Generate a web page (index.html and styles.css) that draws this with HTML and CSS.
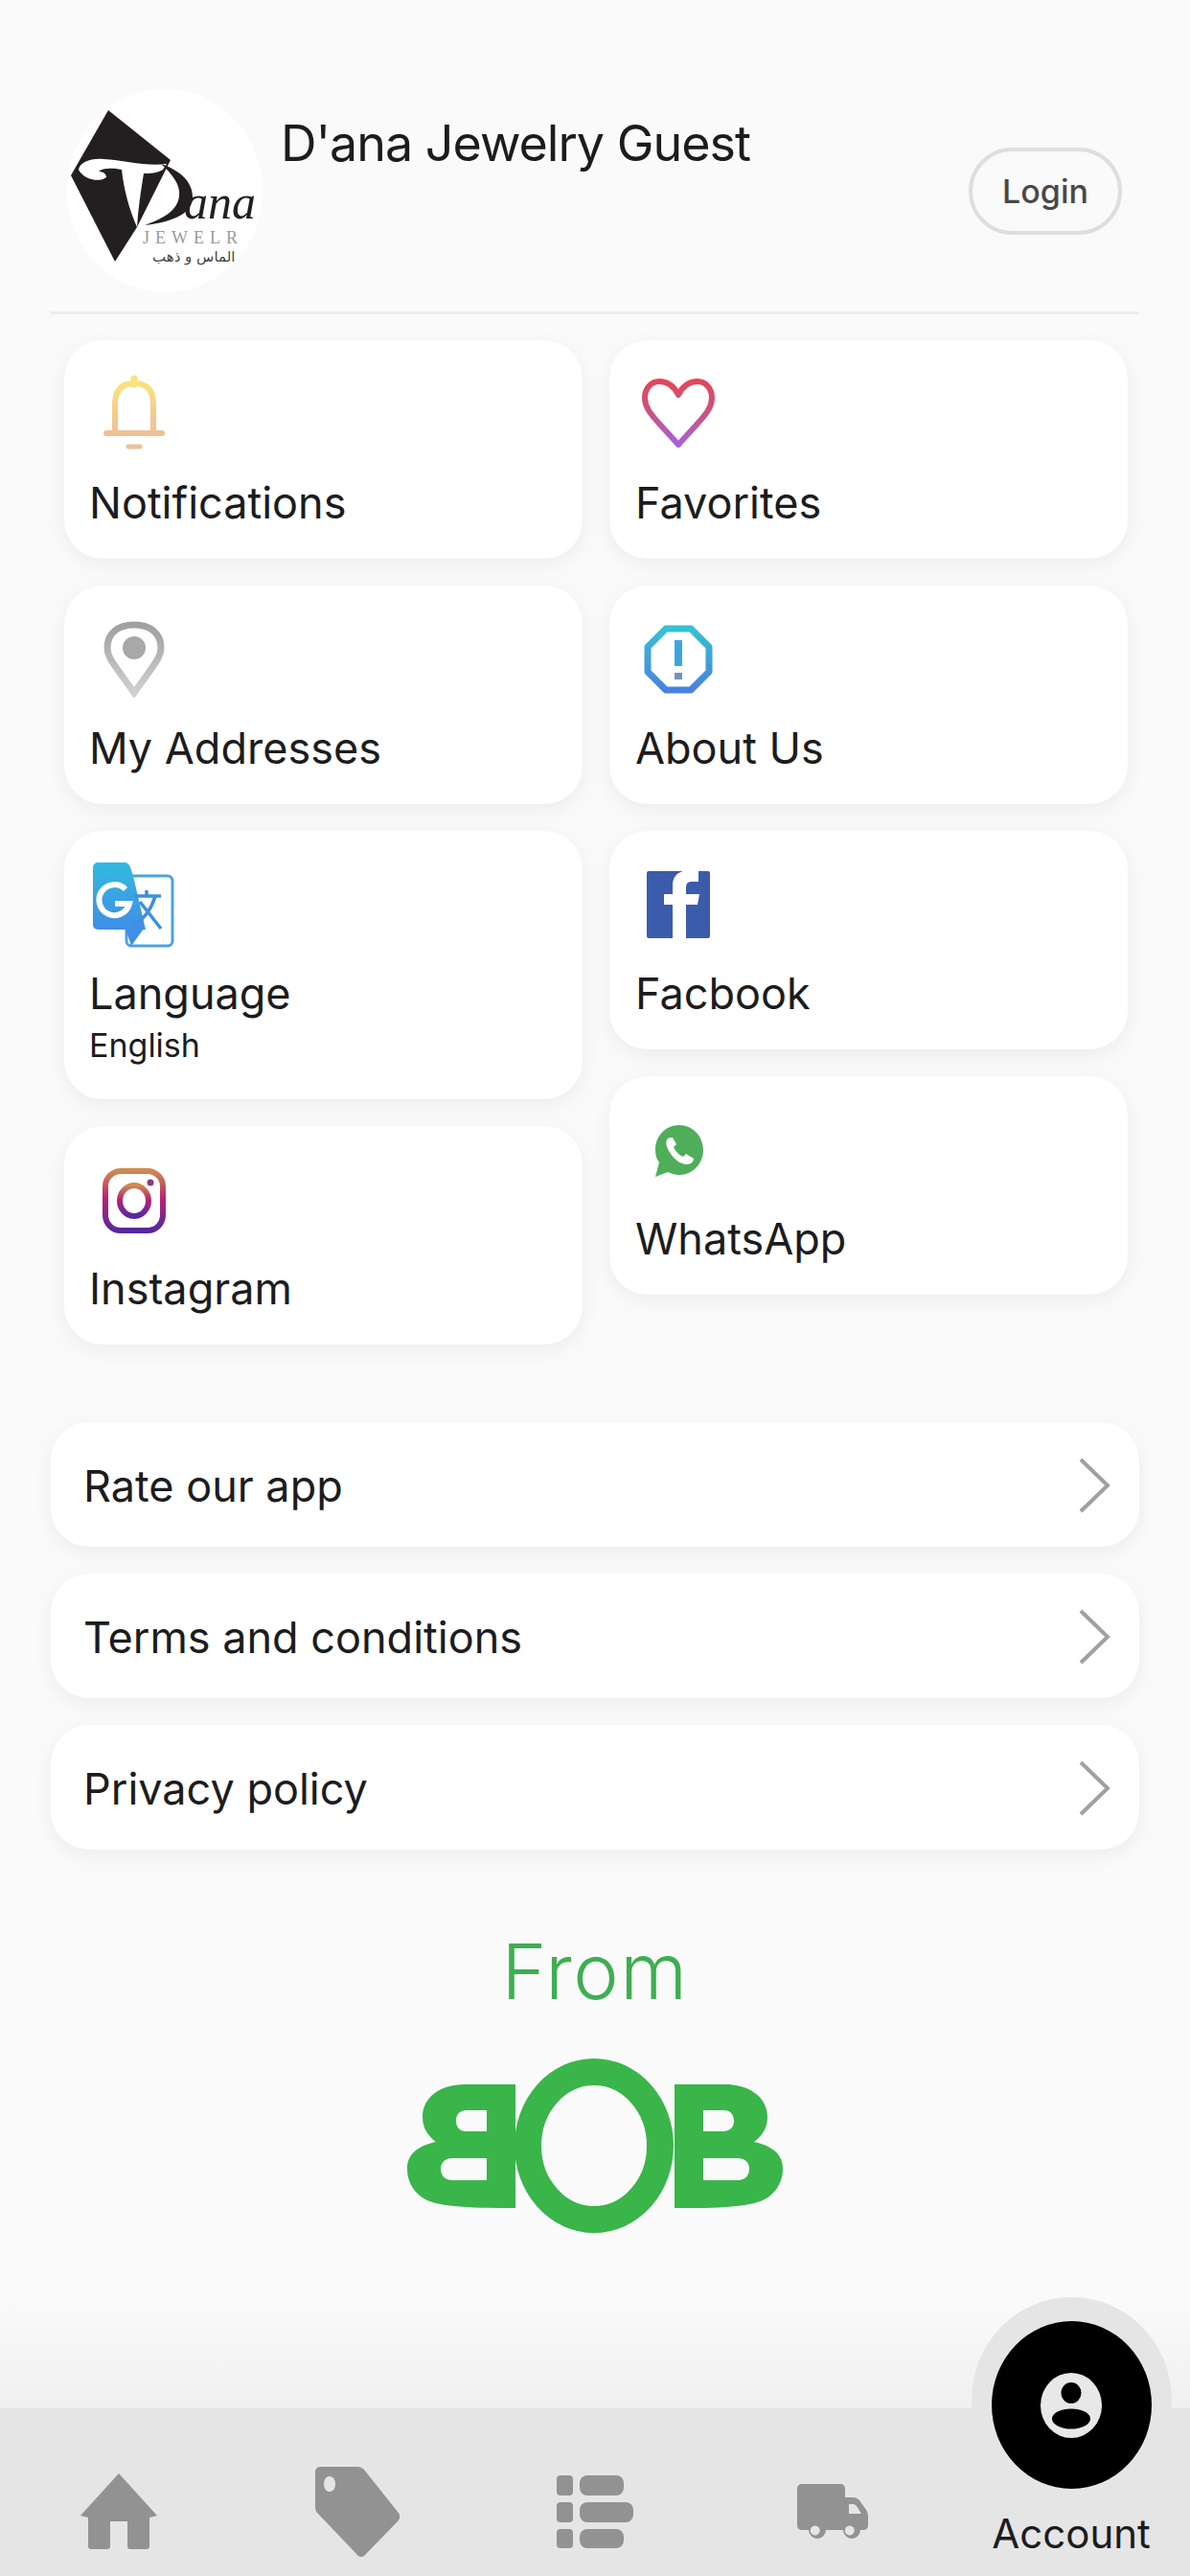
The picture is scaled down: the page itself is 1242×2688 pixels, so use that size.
FILE: index.html
```html
<!DOCTYPE html>
<html lang="en">
<head>
    <meta charset="UTF-8">
    <meta name="viewport" content="width=device-width, initial-scale=1.0">
    <title>Account</title>
    <link rel="stylesheet" href="styles.css">
</head>
<body>
    <div class="page">
        <main class="content">
            <header class="profile">
                <div class="avatar">
                    <svg class="avatar-mark" viewBox="0 0 204 212">
                        <polygon points="43,22 108,74 73,144 50,180 4,90" fill="#231f20"/>
                        <path d="M12 84c2-8 12-12 26-11 22 1 44 8 66 5l-4 6c-6 4-14 4-20 4-3 18-6 38-7 56-8-18-14-40-16-60-10-2-20-2-24 2 4 0 8 2 8 6-8 6-24 2-29-8z" fill="#fff"/>
                        <path d="M98 78c18 6 34 18 33 36-1 14-16 24-50 28 22-8 34-16 36-30 2-12-8-24-19-34z" fill="#231f20"/>
                    </svg>
                    <span class="avatar-dana">ana</span>
                    <span class="avatar-jewelry">JEWELR</span>
                    <span class="avatar-arabic">الماس و ذهب</span>
                </div>
                <h1 class="profile-name">D'ana Jewelry Guest</h1>
                <button class="login-btn">Login</button>
            </header>
            <div class="divider"></div>

            <div class="card-columns">
                <div class="card-column">
                    <a class="card">
                        <svg class="card-icon" viewBox="0 0 64 82">
                            <defs><linearGradient id="bellGrad" x1="0" y1="0" x2="0" y2="1"><stop offset="0" stop-color="#f9e27c"/><stop offset="1" stop-color="#efc095"/></linearGradient></defs>
                            <path d="M3 62h58M12 62V32C12 16 20 10 32 10s20 6 20 22v30" fill="none" stroke="url(#bellGrad)" stroke-width="6" stroke-linecap="round"/>
                            <path d="M32 5v6" stroke="#f9e27c" stroke-width="7" stroke-linecap="round"/>
                            <path d="M26 76h12" stroke="#efc095" stroke-width="5" stroke-linecap="round"/>
                        </svg>
                        <span class="card-title">Notifications</span>
                    </a>
                    <a class="card">
                        <svg class="card-icon" viewBox="0 0 64 82">
                            <defs><linearGradient id="pinGrad" x1="0" y1="0" x2="0" y2="1"><stop offset="0" stop-color="#a0a0a0"/><stop offset="1" stop-color="#d0d0d0"/></linearGradient></defs>
                            <path d="M32 6C15 6 4 15 4 30c0 9 6 16 13 26l15 21 15-21c7-10 13-17 13-26C60 15 49 6 32 6z" fill="none" stroke="url(#pinGrad)" stroke-width="7"/>
                            <ellipse cx="32" cy="30" rx="12" ry="12" fill="#a8a8a8"/>
                        </svg>
                        <span class="card-title">My Addresses</span>
                    </a>
                    <a class="card card-translate">
                        <svg class="card-icon icon-translate" viewBox="0 0 86 90">
                            <defs><linearGradient id="transGrad" x1="0" y1="0" x2="0" y2="1"><stop offset="0" stop-color="#33b9e0"/><stop offset="1" stop-color="#3f8fe6"/></linearGradient></defs>
                            <rect x="36" y="15" width="48" height="73" rx="5" fill="#fff" stroke="#4aa3e4" stroke-width="3"/>
                            <path d="M6 1h28c3 0 5 2 6 5l3 9 13 56H6a5 5 0 0 1-5-5V6a5 5 0 0 1 5-5z" fill="url(#transGrad)"/>
                            <path d="M35 70l6 18 13-18z" fill="#3f8fe6"/>
                            <path d="M35 29a16 16 0 1 0 4 15H24" fill="none" stroke="#fff" stroke-width="6"/>
                            <path d="M44 36h28M57 30v6M66 36c-4 14-12 24-22 30M50 42l22 28" fill="none" stroke="#3f8fd8" stroke-width="3.5"/>
                        </svg>
                        <span class="card-title">Language</span>
                        <span class="card-sub">English</span>
                    </a>
                    <a class="card">
                        <svg class="card-icon icon-insta" viewBox="0 0 66 68">
                            <defs><linearGradient id="instaGrad" x1="0" y1="0" x2="0" y2="1"><stop offset="0" stop-color="#d08a50"/><stop offset="0.45" stop-color="#b82472"/><stop offset="1" stop-color="#5628a0"/></linearGradient></defs>
                            <rect x="3" y="3" width="60" height="62" rx="16" fill="none" stroke="url(#instaGrad)" stroke-width="6"/>
                            <ellipse cx="33" cy="34" rx="15" ry="16" fill="none" stroke="url(#instaGrad)" stroke-width="6"/>
                            <circle cx="50" cy="15" r="3.5" fill="#8c3a80"/>
                        </svg>
                        <span class="card-title">Instagram</span>
                    </a>
                </div>
                <div class="card-column">
                    <a class="card">
                        <svg class="card-icon icon-heart" viewBox="0 0 76 72">
                            <defs><linearGradient id="heartGrad" x1="0" y1="0" x2="0" y2="1"><stop offset="0" stop-color="#e2475a"/><stop offset="0.5" stop-color="#c9547e"/><stop offset="1" stop-color="#a960e0"/></linearGradient></defs>
                            <path d="M38 17C33 7 26 3 18 3 9 3 3 11 3 20c0 10 6 17 15 27l20 22 20-22c9-10 15-17 15-27 0-9-6-17-15-17-8 0-15 4-20 14z" fill="none" stroke="url(#heartGrad)" stroke-width="6" stroke-linejoin="round"/>
                        </svg>
                        <span class="card-title">Favorites</span>
                    </a>
                    <a class="card">
                        <svg class="card-icon icon-about" viewBox="0 0 72 72">
                            <defs><linearGradient id="aboutGrad" x1="0" y1="0" x2="0" y2="1"><stop offset="0" stop-color="#36c2d0"/><stop offset="1" stop-color="#4a80e0"/></linearGradient></defs>
                            <polygon points="23,4 49,4 68,23 68,49 49,68 23,68 4,49 4,23" fill="none" stroke="url(#aboutGrad)" stroke-width="7" stroke-linejoin="round"/>
                            <path d="M36 16v27" stroke="#3da6de" stroke-width="8"/>
                            <rect x="32" y="50" width="8" height="7" fill="#6f94c8"/>
                        </svg>
                        <span class="card-title">About Us</span>
                    </a>
                    <a class="card">
                        <svg class="card-icon icon-fb" viewBox="0 0 66 70">
                            <path d="M2 0h36v0c-8 2-11 8-11 15v9h-9v11h9v35H2a2 2 0 0 1-2-2V2a2 2 0 0 1 2-2z" fill="#3b5cab"/>
                            <path d="M54 0h10a2 2 0 0 1 2 2v66a2 2 0 0 1-2 2H41V35h12l2-11H41v-7c0-4 2-6 6-6h7z" fill="#3b5cab"/>
                        </svg>
                        <span class="card-title">Facbook</span>
                    </a>
                    <a class="card">
                        <svg class="card-icon icon-wa" viewBox="0 0 52 56">
                            <path d="M26 1C12 1 1 12 1 27c0 5 1 9 4 13L1 55l13-5c4 2 8 3 12 3 14 0 25-12 25-26S40 1 26 1z" fill="#4fae59"/>
                            <path d="M14 15c-3 3-2 9 3 16s11 11 17 11c4 0 7-3 7-6l-8-5-3 3c-5-2-8-6-10-10l3-3-4-7c-2 0-4 0-5 1z" fill="#fff"/>
                        </svg>
                        <span class="card-title">WhatsApp</span>
                    </a>
                </div>
            </div>

            <div class="link-list">
                <a class="link-row"><span>Rate our app</span>
                    <svg class="chevron" viewBox="0 0 34 60"><path d="M3 3l28 27L3 57" fill="none" stroke="#a0a0a0" stroke-width="4"/></svg></a>
                <a class="link-row"><span>Terms and conditions</span>
                    <svg class="chevron" viewBox="0 0 34 60"><path d="M3 3l28 27L3 57" fill="none" stroke="#a0a0a0" stroke-width="4"/></svg></a>
                <a class="link-row"><span>Privacy policy</span>
                    <svg class="chevron" viewBox="0 0 34 60"><path d="M3 3l28 27L3 57" fill="none" stroke="#a0a0a0" stroke-width="4"/></svg></a>
            </div>

            <div class="from-block">
                <div class="from-text">From</div>
                <svg class="bob-logo" viewBox="0 0 392 184" role="img" aria-label="BOB">
                    <path fill-rule="evenodd" fill="#39b54a" d="M279 28H332C358 28 376 42 376 62C376 74 370 82 362 88C380 92 392 100 392 116C392 134 380 148 362 152C340 157 310 157 279 157ZM309 55H330C338 55 341 60 341 66C341 72 338 77 330 77H309ZM309 105H345C353 105 357 110 357 116C357 123 353 128 345 128H309Z"/>
                    <path fill-rule="evenodd" fill="#39b54a" transform="matrix(-1 0 0 1 392 0)" d="M279 28H332C358 28 376 42 376 62C376 74 370 82 362 88C380 92 392 100 392 116C392 134 380 148 362 152C340 157 310 157 279 157ZM309 55H330C338 55 341 60 341 66C341 72 338 77 330 77H309ZM309 105H345C353 105 357 110 357 116C357 123 353 128 345 128H309Z"/>
                    <ellipse cx="195" cy="92" rx="69" ry="77" fill="none" stroke="#39b54a" stroke-width="28"/>
                </svg>
            </div>
        </main>

        <nav class="tabbar">
            <a class="tab">
                <svg width="80" height="80" viewBox="0 0 80 80"><path d="M40 0L80 44 72 46V76a3 3 0 0 1-3 3H52a3 3 0 0 1-3-3V50H31V76a3 3 0 0 1-3 3H11a3 3 0 0 1-3-3V46L0 44z" fill="#929292"/></svg>
            </a>
            <a class="tab">
                <svg width="88" height="94" viewBox="0 0 88 94"><path fill-rule="evenodd" d="M6 0h38c3 0 5 1 7 3l35 44c3 3 3 7 0 10L53 91c-3 4-7 4-10 0L3 49c-2-2-3-4-3-7V6C0 2 2 0 6 0zM15 10c-4 0-6 4-6 8s2 8 6 8 6-4 6-8-2-8-6-8z" fill="#929292"/></svg>
            </a>
            <a class="tab">
                <svg width="80" height="76" viewBox="0 0 80 76" fill="#929292">
                    <rect x="0" y="0" width="17" height="21" rx="4"/><rect x="24" y="0" width="46" height="21" rx="8"/>
                    <rect x="0" y="28" width="17" height="21" rx="4"/><rect x="24" y="28" width="56" height="21" rx="8"/>
                    <rect x="0" y="56" width="17" height="20" rx="4"/><rect x="24" y="56" width="46" height="20" rx="8"/>
                </svg>
            </a>
            <a class="tab">
                <svg width="74" height="58" viewBox="0 0 74 58"><path fill-rule="evenodd" d="M5 0h40c3 0 5 2 5 5v9h8c3 0 5 1 7 3l7 10c1 2 2 4 2 6v10c0 3-2 5-5 5h-3a9 9 0 0 1-18 0H30a9 9 0 0 1-18 0H5c-3 0-5-2-5-5V5c0-3 2-5 5-5zM54 21v10h13l-5-8c-1-1-2-2-3-2zM21 44a5 5 0 1 0 0 9 5 5 0 0 0 0-9zM57 44a5 5 0 1 0 0 9 5 5 0 0 0 0-9z" fill="#929292"/></svg>
            </a>
            <a class="tab tab-active">
                <div class="tab-halo"></div>
                <div class="tab-bubble">
                    <svg class="tab-person" viewBox="0 0 68 72">
                        <ellipse cx="34" cy="36" rx="32" ry="34" fill="#e8e8e8"/>
                        <ellipse cx="34" cy="23" rx="10.5" ry="11" fill="#000"/>
                        <ellipse cx="34" cy="50" rx="20" ry="10.5" fill="#000"/>
                    </svg>
                </div>
                <span class="tab-label">Account</span>
            </a>
        </nav>
    </div>
</body>
</html>
```

FILE: styles.css
```css
* {
    box-sizing: border-box;
}
body {
    margin: 0;
    font-family: Inter, "Liberation Sans", sans-serif;
    color: #1c1c1e;
    background-color: #fafafa;
}
.page {
    width: 1242px;
    height: 2688px;
    display: flex;
    flex-direction: column;
    background: linear-gradient(#fafafa 0, #fafafa 2400px, #f0f0f0 2513px);
    overflow: hidden;
}
.content {
    flex: 1;
    padding: 93px 53px 0;
}
.profile {
    display: flex;
    align-items: flex-start;
    margin-left: 17px;
    height: 212px;
}
.avatar {
    position: relative;
    width: 204px;
    height: 212px;
    border-radius: 50%;
    background-color: #fff;
    overflow: hidden;
    flex-shrink: 0;
}
.avatar-mark {
    position: absolute;
    left: 0;
    top: 0;
    width: 204px;
    height: 212px;
}
.avatar-dana {
    position: absolute;
    left: 122px;
    top: 89px;
    font-family: "Liberation Serif", serif;
    font-style: italic;
    font-size: 50px;
    color: #231f20;
}
.avatar-jewelry {
    position: absolute;
    left: 79px;
    top: 145px;
    font-family: "Liberation Serif", serif;
    font-size: 18px;
    letter-spacing: 6px;
    color: #9a9a9a;
}
.avatar-arabic {
    position: absolute;
    left: 89px;
    top: 166px;
    font-family: "DejaVu Sans", sans-serif;
    font-size: 15px;
    color: #444;
    white-space: nowrap;
}
.profile-name {
    margin: 27px 0 0 19px;
    font-size: 52px;
    font-weight: 400;
    line-height: 60px;
    letter-spacing: -1px;
    flex: 1;
    white-space: nowrap;
}
.login-btn {
    width: 160px;
    height: 91px;
    margin: 61px 18px 0 0;
    border: 4px solid #dedede;
    border-radius: 46px;
    background: transparent;
    color: #48484a;
    font-family: inherit;
    font-size: 34px;
    font-weight: 500;
}
.divider {
    height: 3px;
    margin-top: 20px;
    background-color: #ececec;
}
.card-columns {
    display: flex;
    gap: 28px;
    margin: 27px 12px 0 14px;
    align-items: flex-start;
}
.card-column {
    flex: 1;
    display: flex;
    flex-direction: column;
    gap: 28px;
}
.card {
    display: flex;
    flex-direction: column;
    height: 228px;
    padding: 35px 0 0 27px;
    background-color: #fff;
    border-radius: 40px;
    box-shadow: 0 6px 22px rgba(0,0,0,0.06);
}
.card-translate {
    height: 280px;
}
.card-icon {
    display: block;
    width: 64px;
    height: 82px;
    margin: 0 0 -2px 14px;
}
.card-column:first-child .card-title,
.card-column:first-child .card-sub {
    margin-left: -1px;
}
.icon-translate {
    width: 86px;
    height: 90px;
    margin: -3px 0 -7px 2px;
}
.icon-insta {
    width: 66px;
    height: 68px;
    margin: 9px 0 3px 13px;
}
.icon-heart {
    width: 76px;
    height: 72px;
    margin: 5px 0 3px 7px;
}
.icon-about {
    width: 72px;
    height: 72px;
    margin: 6px 0 2px 9px;
}
.icon-fb {
    width: 66px;
    height: 70px;
    margin: 7px 0 3px 12px;
}
.icon-wa {
    width: 52px;
    height: 56px;
    margin: 15px 0 9px 20px;
}
.card-title {
    margin-top: 28px;
    font-size: 45px;
    line-height: 54px;
}
.card-sub {
    margin-top: 6px;
    font-size: 34px;
    line-height: 42px;
}
.link-list {
    display: flex;
    flex-direction: column;
    gap: 28px;
    margin-top: 81px;
}
.link-row {
    display: flex;
    align-items: center;
    justify-content: space-between;
    height: 130px;
    padding: 2px 30px 0 34px;
    font-size: 45px;
    background-color: #fff;
    border-radius: 40px;
    box-shadow: 0 6px 22px rgba(0,0,0,0.06);
}
.chevron {
    width: 34px;
    height: 60px;
}
.from-block {
    display: flex;
    flex-direction: column;
    align-items: center;
    margin-top: 81px;
}
.from-text {
    font-size: 80px;
    font-weight: 300;
    line-height: 92px;
    letter-spacing: 1.5px;
    color: #3fae52;
}
.bob-logo {
    width: 392px;
    height: 184px;
    margin-top: 44px;
}
.tabbar {
    position: relative;
    display: grid;
    grid-template-columns: repeat(5, 1fr);
    height: 175px;
    background-color: #e5e5e5;
}
.tab {
    display: flex;
    justify-content: center;
    align-items: center;
    padding-top: 40px;
}
.tab-active {
    position: relative;
}
.tab-halo {
    position: absolute;
    left: 20px;
    top: -116px;
    width: 209px;
    height: 215px;
    border-radius: 50%;
    background-color: #e5e5e5;
}
.tab-bubble {
    position: absolute;
    left: 41px;
    top: -91px;
    width: 167px;
    height: 175px;
    border-radius: 50%;
    background-color: #000;
    display: flex;
    align-items: center;
    justify-content: center;
}
.tab-person {
    width: 68px;
    height: 72px;
}
.tab-label {
    position: absolute;
    left: 21px;
    top: 107px;
    width: 207px;
    text-align: center;
    font-size: 42px;
    line-height: 48px;
    color: #1c1c1e;
}
```
